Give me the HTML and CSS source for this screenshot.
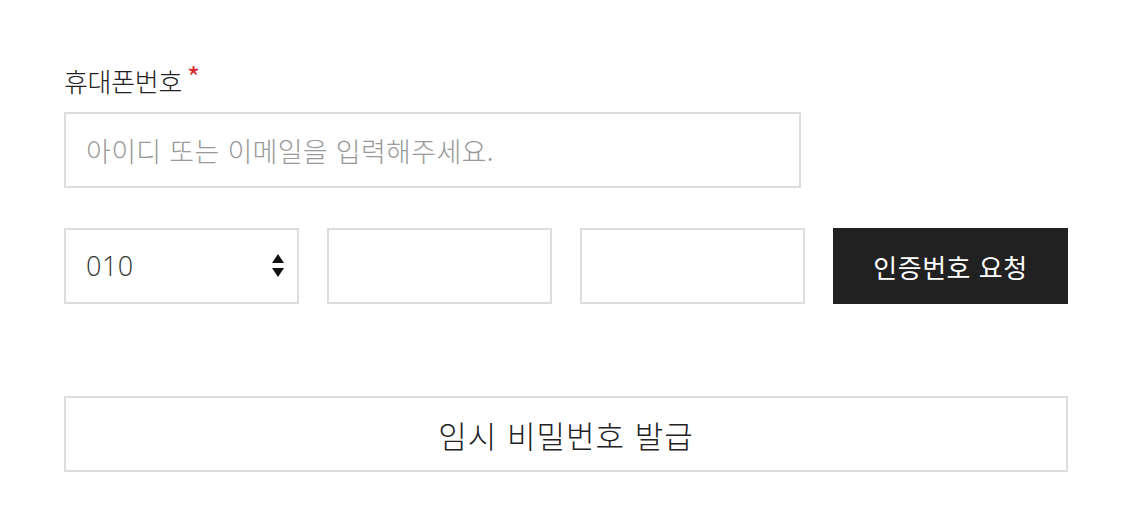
FILE: index.html
```html
<!DOCTYPE html>
<html lang="ko">
<head>
<meta charset="utf-8">
<link rel="stylesheet" href="styles.css">
</head>
<body>
<div class="form">
  <label class="label">휴대폰번호<span class="req">*</span></label>
  <div class="field wide"><span class="placeholder">아이디 또는 이메일을 입력해주세요.</span></div>
  <div class="phone-row">
    <div class="field select">
      <span class="value">010</span>
      <svg class="arrows" width="14" height="26" viewBox="0 0 14 26"><path d="M7 1 L13 10 L1 10 Z" fill="#111"/><path d="M1 15 L13 15 L7 24 Z" fill="#111"/></svg>
    </div>
    <div class="field part"></div>
    <div class="field part"></div>
    <button class="btn-dark">인증번호 요청</button>
  </div>
  <button class="btn-outline">임시 비밀번호 발급</button>
</div>
</body>
</html>
```
FILE: styles.css
```css
* { box-sizing: border-box; }
html, body { margin: 0; padding: 0; background: #fff; }
body { font-family: "Noto Sans CJK KR", "Noto Sans", sans-serif; color: #222; }
.form { padding: 64px 0 0 64px; width: 1068px; display: flex; flex-direction: column; }
.label { font-size: 26px; font-weight: 300; line-height: 34px; height: 32px; display: flex; align-items: flex-start; color: #222; letter-spacing: -0.3px; }
.req { color: #d8262b; font-size: 28px; line-height: 20px; margin-left: 5px; margin-top: 2px; font-weight: 400; }
.field { border: 2px solid #ddd; height: 76px; background: #fff; display: flex; align-items: center; }
.wide { width: 737px; margin-top: 16px; padding-left: 20px; }
.placeholder { font-size: 27px; font-weight: 300; color: #999; letter-spacing: 0.3px; }
.phone-row { display: flex; gap: 28px; margin-top: 40px; }
.select { width: 235px; padding: 0 12px 0 20px; justify-content: space-between; }
.select .value { font-family: "Open Sans", "Noto Sans CJK KR", sans-serif; font-size: 27px; font-weight: 300; color: #333; letter-spacing: 0.5px; margin-bottom: 2px; }
.part { width: 225px; }
.btn-dark { width: 235px; height: 76px; border: 0; background: #212121; color: #fff; font-family: inherit; font-size: 26px; font-weight: 400; padding: 0; letter-spacing: 0.5px; }
.btn-outline { margin-top: 92px; width: 1004px; height: 76px; border: 2px solid #ddd; background: #fff; font-family: inherit; font-size: 31px; font-weight: 300; color: #222; padding: 0; letter-spacing: 1px; }
```
